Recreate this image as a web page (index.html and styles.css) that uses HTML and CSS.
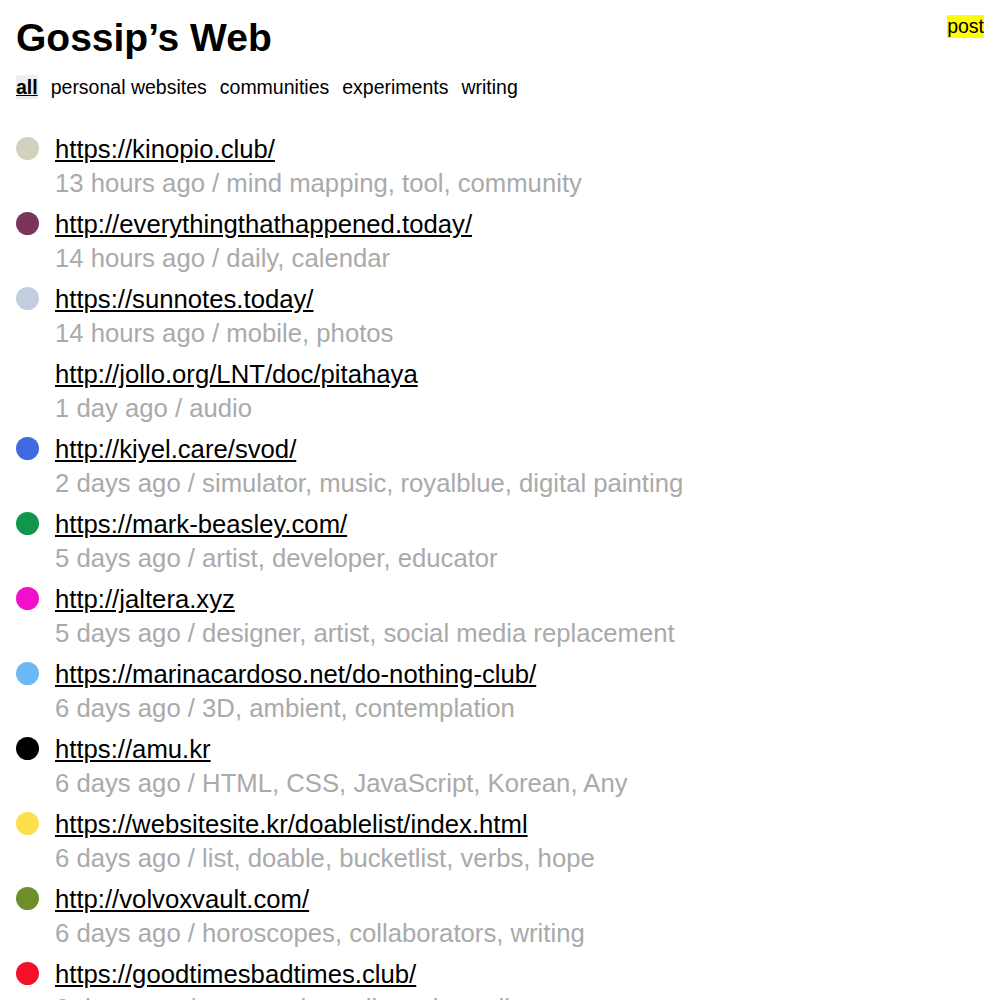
FILE: index.html
```html
<!DOCTYPE html>
<html lang="en">
<head>
    <meta charset="UTF-8">
    <meta name="viewport" content="width=device-width, initial-scale=1.0">
    <title>Gossip’s Web</title>
    <link rel="stylesheet" href="styles.css">
</head>
<body>
    <header class="top">
        <h1>Gossip’s Web</h1>
        <a class="post" href="#">post</a>
    </header>

    <!-- filtros por categoria -->
    <nav class="tags">
        <a class="tag active" href="#">all</a>
        <a class="tag" href="#">personal websites</a>
        <a class="tag" href="#">communities</a>
        <a class="tag" href="#">experiments</a>
        <a class="tag" href="#">writing</a>
    </nav>

    <ul class="sites">
        <li class="site">
            <span class="dot" style="background:#d3d1bd"></span>
            <div class="info">
                <a href="#">https://kinopio.club/</a>
                <div class="meta">13 hours ago / mind mapping, tool, community</div>
            </div>
        </li>
        <li class="site">
            <span class="dot" style="background:#7b355b"></span>
            <div class="info">
                <a href="#">http://everythingthathappened.today/</a>
                <div class="meta">14 hours ago / daily, calendar</div>
            </div>
        </li>
        <li class="site">
            <span class="dot" style="background:#c3cde0"></span>
            <div class="info">
                <a href="#">https://sunnotes.today/</a>
                <div class="meta">14 hours ago / mobile, photos</div>
            </div>
        </li>
        <li class="site">
            <span class="dot"></span>
            <div class="info">
                <a href="#">http://jollo.org/LNT/doc/pitahaya</a>
                <div class="meta">1 day ago / audio</div>
            </div>
        </li>
        <li class="site">
            <span class="dot" style="background:#4169e1"></span>
            <div class="info">
                <a href="#">http://kiyel.care/svod/</a>
                <div class="meta">2 days ago / simulator, music, royalblue, digital painting</div>
            </div>
        </li>
        <li class="site">
            <span class="dot" style="background:#11974c"></span>
            <div class="info">
                <a href="#">https://mark-beasley.com/</a>
                <div class="meta">5 days ago / artist, developer, educator</div>
            </div>
        </li>
        <li class="site">
            <span class="dot" style="background:#f20fcb"></span>
            <div class="info">
                <a href="#">http://jaltera.xyz</a>
                <div class="meta">5 days ago / designer, artist, social media replacement</div>
            </div>
        </li>
        <li class="site">
            <span class="dot" style="background:#6ab9f6"></span>
            <div class="info">
                <a href="#">https://marinacardoso.net/do-nothing-club/</a>
                <div class="meta">6 days ago / 3D, ambient, contemplation</div>
            </div>
        </li>
        <li class="site">
            <span class="dot" style="background:#000"></span>
            <div class="info">
                <a href="#">https://amu.kr</a>
                <div class="meta">6 days ago / HTML, CSS, JavaScript, Korean, Any</div>
            </div>
        </li>
        <li class="site">
            <span class="dot" style="background:#fde04b"></span>
            <div class="info">
                <a href="#">https://websitesite.kr/doablelist/index.html</a>
                <div class="meta">6 days ago / list, doable, bucketlist, verbs, hope</div>
            </div>
        </li>
        <li class="site">
            <span class="dot" style="background:#6e8e2a"></span>
            <div class="info">
                <a href="#">http://volvoxvault.com/</a>
                <div class="meta">6 days ago / horoscopes, collaborators, writing</div>
            </div>
        </li>
        <li class="site">
            <span class="dot" style="background:#f5102a"></span>
            <div class="info">
                <a href="#">https://goodtimesbadtimes.club/</a>
                <div class="meta">6 days ago / community, collectathon, directory</div>
            </div>
        </li>
    </ul>
</body>
</html>
```

FILE: styles.css
```css
body {
    font-family: "Liberation Sans", Arial, sans-serif;
    margin: 0;
    padding: 14px 16px;
    background-color: #fff;
    color: #000;
}
a {
    color: #000;
}
.top {
    display: flex;
    justify-content: space-between;
    align-items: flex-start;
}
.top h1 {
    margin: 0;
    font-size: 39px;
    line-height: 48px;
}
.post {
    font-size: 19.5px;
    text-decoration: none;
    background-color: #ff0;
    line-height: 23px;
    margin-top: 1px;
}
.tags {
    display: flex;
    gap: 13px;
    margin-top: 13px;
    font-size: 19.5px;
    line-height: 24px;
}
.tag {
    text-decoration: none;
}
.tag.active {
    font-weight: bold;
    text-decoration: underline;
    background-color: #eee;
}
.sites {
    list-style: none;
    margin: 33px 0 0;
    padding: 0;
}
.site {
    display: flex;
    gap: 16px;
    margin-bottom: 7px;
    font-size: 25.7px;
    line-height: 34px;
}
.dot {
    flex: none;
    width: 23px;
    height: 23px;
    border-radius: 50%;
    margin-top: 5px;
}
.meta {
    color: #aaa;
}
```
